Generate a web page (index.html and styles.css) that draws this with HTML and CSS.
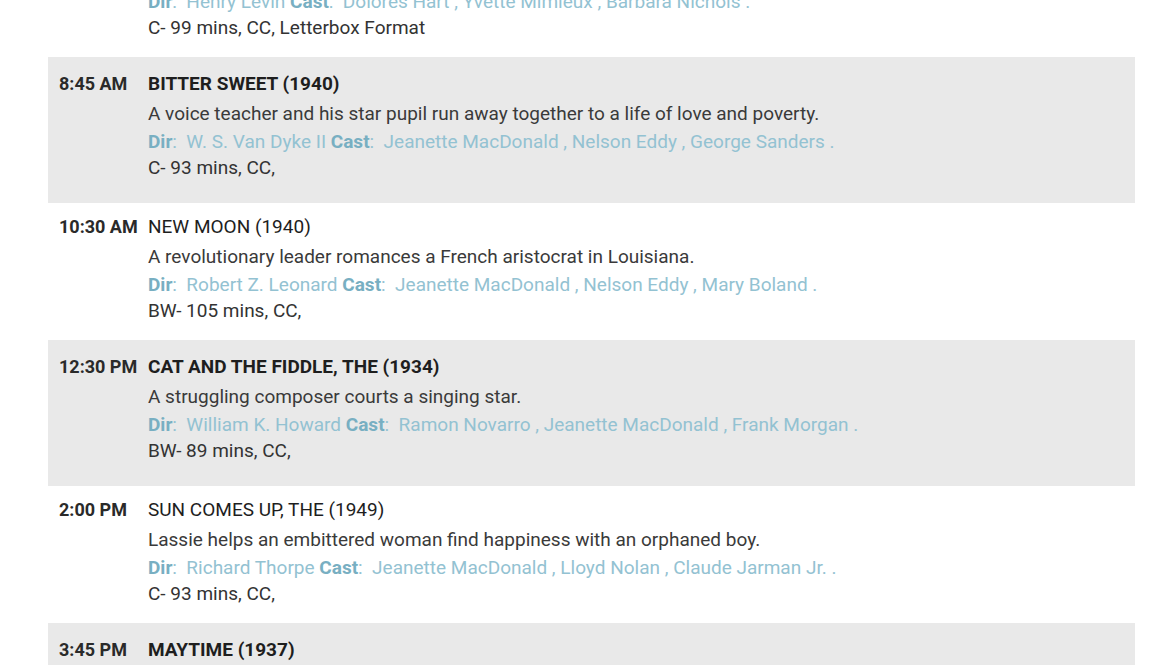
FILE: index.html
```html
<!DOCTYPE html>
<html>
<head>
<meta charset="utf-8">
<link rel="stylesheet" href="styles.css">
</head>
<body>
<div class="schedule">
  <div class="row">
    <div class="time"></div>
    <div class="info">
      <div class="title">FRAGMENT</div>
      <div class="desc">&nbsp;</div>
      <div class="credits"><b>Dir</b>:&nbsp; Henry Levin <b>Cast</b>:&nbsp; Dolores Hart , Yvette Mimieux , Barbara Nichols .</div>
      <div class="format">C- 99 mins, CC, Letterbox Format</div>
    </div>
  </div>
  <div class="row alt">
    <div class="time">8:45 AM</div>
    <div class="info">
      <div class="title bold">BITTER SWEET (1940)</div>
      <div class="desc">A voice teacher and his star pupil run away together to a life of love and poverty.</div>
      <div class="credits"><b>Dir</b>:&nbsp; W. S. Van Dyke II <b>Cast</b>:&nbsp; Jeanette MacDonald , Nelson Eddy , George Sanders .</div>
      <div class="format">C- 93 mins, CC,</div>
    </div>
  </div>
  <div class="row">
    <div class="time">10:30 AM</div>
    <div class="info">
      <div class="title">NEW MOON (1940)</div>
      <div class="desc">A revolutionary leader romances a French aristocrat in Louisiana.</div>
      <div class="credits"><b>Dir</b>:&nbsp; Robert Z. Leonard <b>Cast</b>:&nbsp; Jeanette MacDonald , Nelson Eddy , Mary Boland .</div>
      <div class="format">BW- 105 mins, CC,</div>
    </div>
  </div>
  <div class="row alt">
    <div class="time">12:30 PM</div>
    <div class="info">
      <div class="title bold">CAT AND THE FIDDLE, THE (1934)</div>
      <div class="desc">A struggling composer courts a singing star.</div>
      <div class="credits"><b>Dir</b>:&nbsp; William K. Howard <b>Cast</b>:&nbsp; Ramon Novarro , Jeanette MacDonald , Frank Morgan .</div>
      <div class="format">BW- 89 mins, CC,</div>
    </div>
  </div>
  <div class="row">
    <div class="time">2:00 PM</div>
    <div class="info">
      <div class="title">SUN COMES UP, THE (1949)</div>
      <div class="desc">Lassie helps an embittered woman find happiness with an orphaned boy.</div>
      <div class="credits"><b>Dir</b>:&nbsp; Richard Thorpe <b>Cast</b>:&nbsp; Jeanette MacDonald , Lloyd Nolan , Claude Jarman Jr. .</div>
      <div class="format">C- 93 mins, CC,</div>
    </div>
  </div>
  <div class="row alt">
    <div class="time">3:45 PM</div>
    <div class="info">
      <div class="title bold">MAYTIME (1937)</div>
      <div class="desc">A singer's romance with a penniless student is doomed by her marriage to her manager.</div>
      <div class="credits"><b>Dir</b>:&nbsp; Robert Z. Leonard <b>Cast</b>:&nbsp; Jeanette MacDonald , Nelson Eddy , John Barrymore .</div>
      <div class="format">BW- 132 mins, CC,</div>
    </div>
  </div>
</div>
</body>
</html>
```
FILE: styles.css
```css
html, body {
  margin: 0;
  padding: 0;
  background: #fff;
  overflow: hidden;
}
body {
  font-family: Roboto, "Liberation Sans", sans-serif;
  font-size: 19px;
  color: #2b2b2b;
}
.schedule {
  margin: -80px 25px 0 48px;
}
.row {
  display: flex;
  padding: 8px 0 17px 11px;
}
.row.alt {
  background: #e9e9e9;
  padding: 11px 0 23px 11px;
}
.time {
  width: 89px;
  flex: none;
  font-weight: 700;
  font-size: 18px;
  line-height: 32px;
  color: #2a2a2a;
}
.info {
  flex: 1;
}
.title {
  line-height: 32px;
  color: #1e1e1e;
}
.title.bold {
  font-weight: 700;
}
.desc {
  line-height: 28px;
  color: #3a3a3a;
}
.credits {
  line-height: 28px;
  color: #93c2d2;
}
.credits b {
  color: #78afc2;
  font-weight: 700;
}
.format {
  line-height: 24px;
  color: #333;
}
```
